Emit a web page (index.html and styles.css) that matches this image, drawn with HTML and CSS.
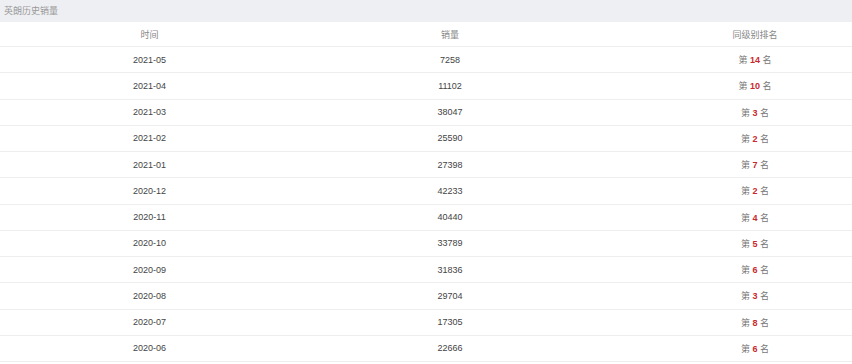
FILE: index.html
```html
<!DOCTYPE html>
<html lang="zh-CN">
<head>
<meta charset="utf-8">
<link rel="stylesheet" href="styles.css">
</head>
<body>
<div class="panel">
  <div class="title">英朗历史销量</div>
  <div class="table">
    <div class="row head"><div>时间</div><div>销量</div><div>同级别排名</div></div>
    <div class="row"><div>2021-05</div><div>7258</div><div class="rank">第 <b>14</b> 名</div></div>
    <div class="row"><div>2021-04</div><div>11102</div><div class="rank">第 <b>10</b> 名</div></div>
    <div class="row"><div>2021-03</div><div>38047</div><div class="rank">第 <b>3</b> 名</div></div>
    <div class="row"><div>2021-02</div><div>25590</div><div class="rank">第 <b>2</b> 名</div></div>
    <div class="row"><div>2021-01</div><div>27398</div><div class="rank">第 <b>7</b> 名</div></div>
    <div class="row"><div>2020-12</div><div>42233</div><div class="rank">第 <b>2</b> 名</div></div>
    <div class="row"><div>2020-11</div><div>40440</div><div class="rank">第 <b>4</b> 名</div></div>
    <div class="row"><div>2020-10</div><div>33789</div><div class="rank">第 <b>5</b> 名</div></div>
    <div class="row"><div>2020-09</div><div>31836</div><div class="rank">第 <b>6</b> 名</div></div>
    <div class="row"><div>2020-08</div><div>29704</div><div class="rank">第 <b>3</b> 名</div></div>
    <div class="row"><div>2020-07</div><div>17305</div><div class="rank">第 <b>8</b> 名</div></div>
    <div class="row"><div>2020-06</div><div>22666</div><div class="rank">第 <b>6</b> 名</div></div>
  </div>
</div>
</body>
</html>
```
FILE: styles.css
```css
html, body {
  margin: 0;
  padding: 0;
  background: #fff;
  overflow: hidden;
}
.panel {
  width: 852px;
  overflow: hidden;
  font-family: "Liberation Sans", "Noto Sans CJK SC", sans-serif;
  font-size: 9px;
  color: #444;
}
.title {
  height: 22px;
  line-height: 22px;
  padding-left: 4px;
  background: #eeeff2;
  color: #999;
}
.table {
  width: 909px;
}
.row {
  display: grid;
  grid-template-columns: 299px 302px 308px;
  height: 25.25px;
  border-bottom: 1px solid #eeeeee;
  align-items: center;
  text-align: center;
}
.row.head {
  height: 24px;
  color: #888;
}
.rank {
  color: #777;
}
.row b {
  color: #c8282e;
  font-weight: bold;
}
```
